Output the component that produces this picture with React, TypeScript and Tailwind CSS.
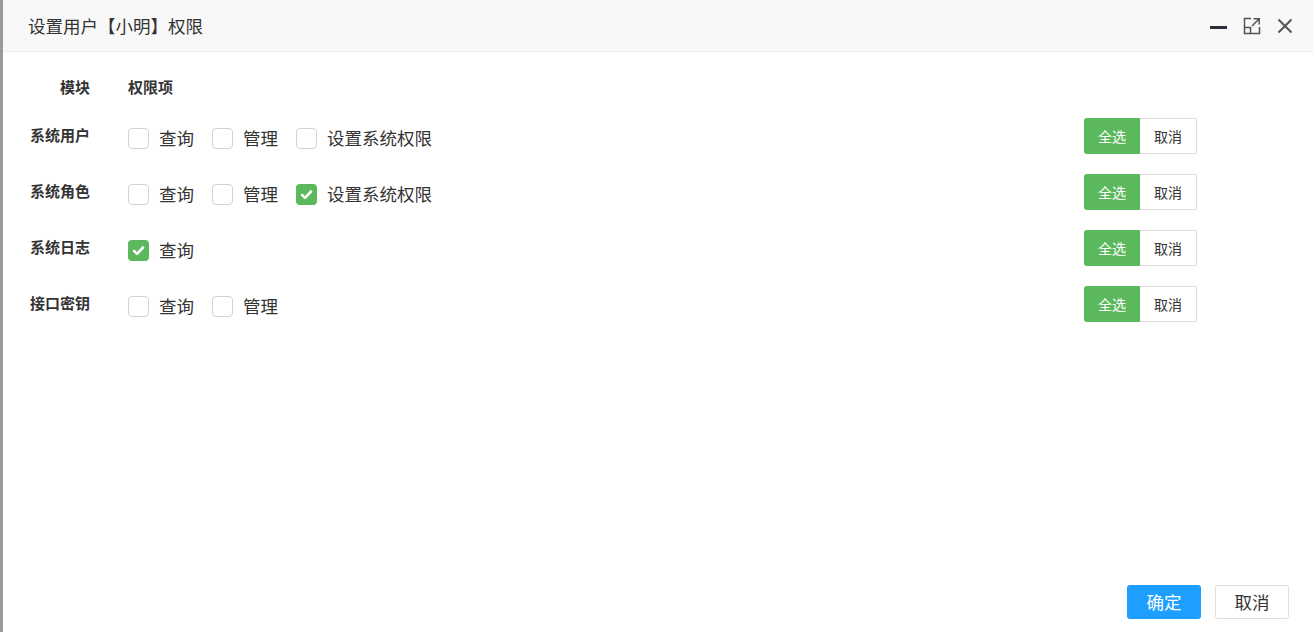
import React from "react";

type Perm = { name: string; checked: boolean };

const modules: { label: string; perms: Perm[] }[] = [
  {
    label: "系统用户",
    perms: [
      { name: "查询", checked: false },
      { name: "管理", checked: false },
      { name: "设置系统权限", checked: false },
    ],
  },
  {
    label: "系统角色",
    perms: [
      { name: "查询", checked: false },
      { name: "管理", checked: false },
      { name: "设置系统权限", checked: true },
    ],
  },
  {
    label: "系统日志",
    perms: [{ name: "查询", checked: true }],
  },
  {
    label: "接口密钥",
    perms: [
      { name: "查询", checked: false },
      { name: "管理", checked: false },
    ],
  },
];

const font = { fontFamily: '"Noto Sans CJK SC", "Noto Sans", sans-serif' };

const CheckBox = ({ checked }: { checked: boolean }) =>
  checked ? (
    <span className="flex h-[21px] w-[21px] items-center justify-center rounded-[4px] bg-[#5cb85c]">
      <svg width="13" height="13" viewBox="0 0 13 13">
        <path d="M2 6.8l3 3 6-6.3" fill="none" stroke="#fff" strokeWidth="2.6" strokeLinecap="round" strokeLinejoin="round" />
      </svg>
    </span>
  ) : (
    <span className="h-[21px] w-[21px] rounded-[4px] border border-[#d2d2d2] bg-white" />
  );

export default function App() {
  return (
    <div className="flex h-[632px] w-[1313px] overflow-hidden bg-[#999]" style={font}>
      <div className="w-[3px] shrink-0 bg-[#9a9a9a]" />
      <div className="flex flex-1 flex-col bg-white">
        {/* title bar */}
        <div className="flex h-[52px] shrink-0 items-center border-b border-[#eee] bg-[#f8f8f8] pl-[25px] pr-[20px]">
          <span className="text-[17.5px] leading-none text-[#333]">设置用户【小明】权限</span>
          <div className="ml-auto flex items-center gap-[15px]">
            <span className="mt-[3px] block h-[3px] w-[17px] bg-[#2e2d3c]" />
            <svg width="18" height="18" viewBox="0 0 18 18" className="ml-[1px]">
              <path d="M8 1.5H1.5v15h15V10" fill="none" stroke="#555" strokeWidth="1.5" />
              <path d="M1.5 10.5h6v6" fill="none" stroke="#555" strokeWidth="1.5" />
              <path d="M9 9l7-7M10.5 1.8h5.7v5.7" fill="none" stroke="#555" strokeWidth="1.5" />
            </svg>
            <svg width="16" height="16" viewBox="0 0 16 16" className="ml-[1px]">
              <path d="M1.5 1.5l13 13M14.5 1.5l-13 13" stroke="#555" strokeWidth="2" />
            </svg>
          </div>
        </div>

        {/* permission table */}
        <div className="flex-1 pr-[116px] pt-[22px]">
          <div className="flex h-[24px] items-center text-[15px] font-bold leading-none text-[#333]">
            <span className="w-[87px] text-right">模块</span>
            <span className="ml-[38px]">权限项</span>
          </div>
          <div className="mt-[8px]">
            {modules.map((m) => (
              <div key={m.label} className="flex h-[56px] items-center">
                <span className="w-[87px] text-right text-[15px] font-bold leading-none text-[#333]">{m.label}</span>
                <div className="ml-[38px] mt-[8px] flex items-center gap-[18px]">
                  {m.perms.map((p) => (
                    <label key={p.name} className="flex items-center gap-[10px]">
                      <CheckBox checked={p.checked} />
                      <span className="text-[17.5px] leading-none text-[#333]">{p.name}</span>
                    </label>
                  ))}
                </div>
                <div className="ml-auto mt-[4px] flex h-[36px] text-[14px] leading-none">
                  <button className="w-[56px] rounded-l-[3px] bg-[#5cb85c] text-white">全选</button>
                  <button className="w-[57px] rounded-r-[3px] border border-l-0 border-[#ddd] bg-white text-[#333]">取消</button>
                </div>
              </div>
            ))}
          </div>
        </div>

        {/* footer */}
        <div className="flex shrink-0 justify-end gap-[14px] pb-[13px] pr-[24px] text-[17.5px] leading-none">
          <button className="h-[34px] w-[74px] rounded-[3px] bg-[#1e9fff] text-white">确定</button>
          <button className="h-[34px] w-[74px] rounded-[3px] border border-[#dedede] bg-white text-[#333]">取消</button>
        </div>
      </div>
    </div>
  );
}
